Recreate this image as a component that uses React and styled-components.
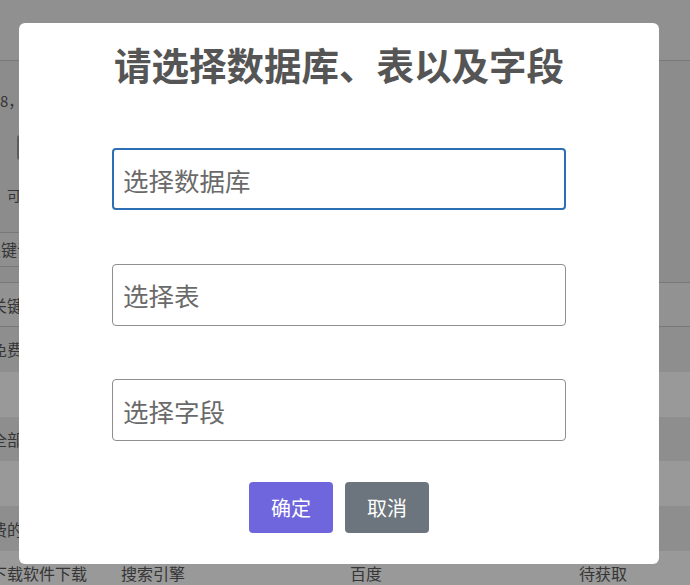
import React from "react";
import styled, { createGlobalStyle } from "styled-components";

const GlobalStyle = createGlobalStyle`
  html, body {
    margin: 0;
    padding: 0;
    overflow: hidden;
  }
  body {
    font-family: "Noto Sans CJK SC", "Noto Sans", sans-serif;
    background: #e9e9e9;
    color: #5a5a5a;
  }
`;

const Page = styled.div`
  width: 690px;
  height: 585px;
  overflow: hidden;
  display: flex;
  flex-direction: column;
`;

const NavBar = styled.div`
  height: 60px;
  flex: none;
  background: #f0f0f0;
  border-bottom: 1px solid #c8c8c8;
`;

const TextLine = styled.div`
  height: 24px;
  line-height: 24px;
  flex: none;
  margin-top: ${(p) => p.$top}px;
  margin-left: ${(p) => p.$shift}px;
  font-size: ${(p) => p.$size}px;
  white-space: nowrap;
`;

const DarkButton = styled.div`
  width: 110px;
  height: 25px;
  flex: none;
  margin-top: 22px;
  margin-left: 17px;
  background: #999;
  border-radius: 3px;
`;

const SearchBox = styled.div`
  height: 33px;
  width: 400px;
  flex: none;
  margin-top: 25px;
  margin-left: -30px;
  padding-left: 14px;
  border: 1px solid #c8c8c8;
  background: #efefef;
  font-size: 16px;
  line-height: 33px;
`;

const Table = styled.div`
  margin-top: 15px;
  margin-left: -9px;
  display: flex;
  flex-direction: column;
`;

const Row = styled.div`
  display: grid;
  grid-template-columns: 130px 229px 229px 1fr;
  align-items: center;
  height: ${(p) => (p.$head ? 43 : 44.8)}px;
  font-size: 16px;
  white-space: nowrap;
  background: ${(p) => (p.$head ? "#f3f3f3" : p.$odd ? "#ededed" : "#ffffff")};
  border-top: ${(p) => (p.$head ? "1px solid #c8c8c8" : "none")};
  border-bottom: ${(p) => (p.$head ? "1px solid #c8c8c8" : "none")};
`;

const Cell = styled.div`
  overflow: hidden;
`;

const Overlay = styled.div`
  position: fixed;
  inset: 0;
  background: rgba(0, 0, 0, 0.4);
  display: flex;
  align-items: flex-start;
  padding: 23px 0 0 19px;
`;

const Modal = styled.div`
  width: 640px;
  height: 541px;
  box-sizing: border-box;
  background: #fff;
  border-radius: 6px;
  display: flex;
  flex-direction: column;
  align-items: center;
  padding-top: 19px;
`;

const Title = styled.h2`
  margin: 0;
  font-size: 37.5px;
  line-height: 43px;
  font-weight: 700;
  color: #555;
  white-space: nowrap;
`;

const Form = styled.div`
  width: 454px;
  margin-top: 63px;
  display: flex;
  flex-direction: column;
  gap: 53.5px;
`;

const Field = styled.input`
  box-sizing: border-box;
  width: 100%;
  height: 62px;
  margin: 0;
  border: ${(p) => (p.$active ? "2px solid #2d6fb4" : "1px solid #8f8f8f")};
  padding: 0 ${(p) => (p.$active ? 9 : 10)}px;
  border-radius: 4px;
  background: #fff;
  font-family: "Noto Sans CJK SC", "Noto Sans", sans-serif;
  font-size: 25.5px;
  color: #555;
  outline: none;
  &::placeholder {
    color: #6a6a6a;
  }
`;

const Actions = styled.div`
  margin-top: 41px;
  display: flex;
  gap: 12px;
`;

const Button = styled.button`
  width: 84px;
  height: 51px;
  border: none;
  border-radius: 4px;
  background: ${(p) => (p.$primary ? "#6f65dd" : "#6c757d")};
  color: #fff;
  font-family: "Noto Sans CJK SC", "Noto Sans", sans-serif;
  font-size: 20px;
  padding: 0;
  cursor: pointer;
`;

const rows = [
  ["免费代理ip", "代理", "谷歌", "待获取"],
  ["", "工具", "谷歌", "待获取"],
  ["全部资源", "资源", "必应", "待获取"],
  ["", "工具", "必应", "待获取"],
  ["费的软件", "软件", "百度", "待获取"],
  ["下载软件下载", "搜索引擎", "百度", "待获取"],
];

export default function App() {
  return (
    <>
      <GlobalStyle />
      <Page>
        <NavBar />
        <TextLine $top={28} $shift={0} $size={15}>8，共收录关键词数据</TextLine>
        <DarkButton />
        <TextLine $top={23} $shift={7} $size={14}>可选择数据库进行查询</TextLine>
        <SearchBox>关键词</SearchBox>
        <Table>
          <Row $head>
            <Cell>关键词</Cell>
            <Cell>分类</Cell>
            <Cell>来源</Cell>
            <Cell>状态</Cell>
          </Row>
          {rows.map((r, i) => (
            <Row key={i} $odd={i % 2 === 0}>
              {r.map((c, j) => (
                <Cell key={j}>{c}</Cell>
              ))}
            </Row>
          ))}
        </Table>
      </Page>
      <Overlay>
        <Modal>
          <Title>请选择数据库、表以及字段</Title>
          <Form>
            <Field $active placeholder="选择数据库" />
            <Field placeholder="选择表" />
            <Field placeholder="选择字段" />
          </Form>
          <Actions>
            <Button $primary>确定</Button>
            <Button>取消</Button>
          </Actions>
        </Modal>
      </Overlay>
    </>
  );
}
